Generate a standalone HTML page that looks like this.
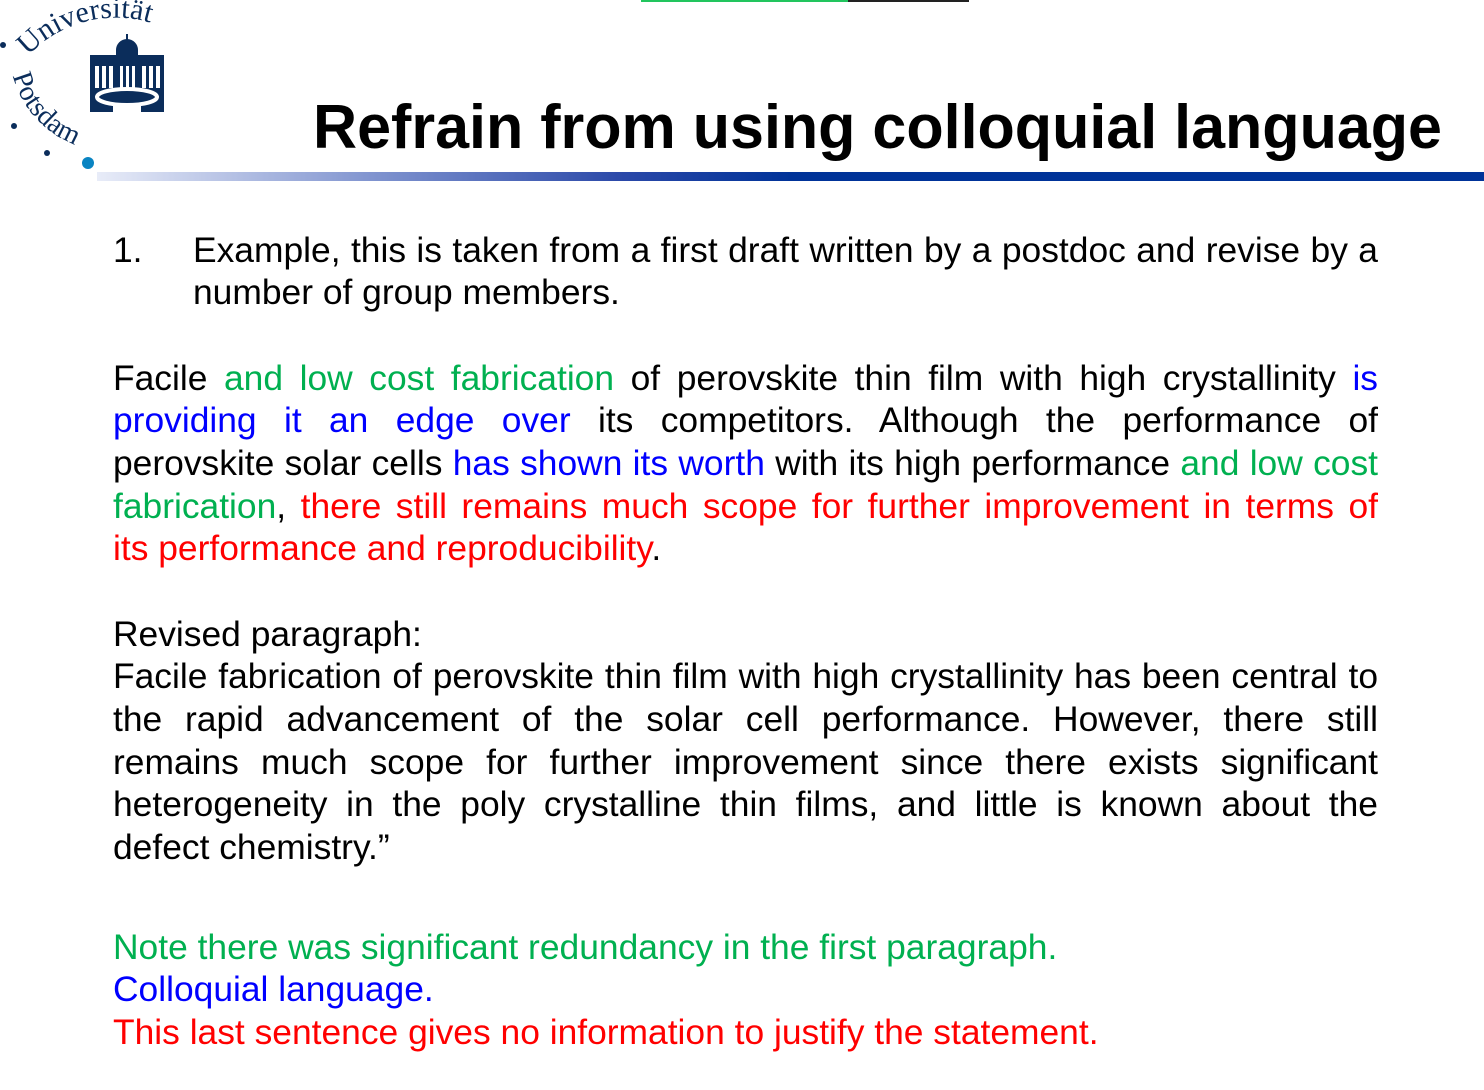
<!DOCTYPE html>
<html><head><meta charset="utf-8"><style>
body{margin:0;width:1484px;height:1090px;background:#fff;position:relative;overflow:hidden;font-family:"Liberation Sans",Arial,sans-serif;}
.l{position:absolute;left:113px;width:1265px;font-size:35.4px;line-height:40px;color:#000;white-space:nowrap;}
.j{text-align:justify;text-align-last:justify;white-space:normal;}
.g{color:#00b050}.b{color:#0000ff}.r{color:#ff0000}
</style></head><body>
<div style="position:absolute;left:641px;top:0;width:207px;height:2px;background:#22c55e"></div>
<div style="position:absolute;left:848px;top:0;width:121px;height:2px;background:#222"></div>
<div style="position:absolute;left:97px;top:172px;width:1387px;height:9px;background:linear-gradient(90deg,#e8ecf8 0%,#7f93cf 20%,#2a48a8 38%,#003399 50%,#003399 100%)"></div>
<svg style="position:absolute;left:0;top:0" width="300" height="190">
 <defs><path id="arc" d="M28,56 A120,120 0 0 1 160,26"/><path id="arc2" d="M12,72 A100,100 0 0 0 98,150"/></defs>
 <text font-family="Liberation Serif,serif" font-size="30" fill="#0b2d5b"><textPath href="#arc" startOffset="0">Universität</textPath></text>
 <text font-family="Liberation Serif,serif" font-size="28" fill="#0b2d5b"><textPath href="#arc2" startOffset="3%">Potsdam</textPath></text>
 <circle cx="3" cy="45" r="3" fill="#0b2d5b"/><circle cx="14" cy="126" r="3" fill="#0b2d5b"/><circle cx="47" cy="153" r="3" fill="#0b2d5b"/><circle cx="88" cy="163" r="6" fill="#0a84c2"/>
 <g fill="#0b2d5b">
  <path d="M116,50 a11,11 0 0 1 22,0 v6 h-22z"/><rect x="126" y="34" width="2" height="6"/>
  <rect x="90" y="55" width="74" height="7"/>
  <rect x="90" y="62" width="74" height="50"/>
 </g>
 <g fill="#fff">
  <rect x="95" y="66" width="4" height="22"/><rect x="102" y="66" width="4" height="22"/><rect x="109" y="66" width="4" height="22"/>
  <rect x="120" y="66" width="3" height="22"/><rect x="126" y="66" width="3" height="22"/><rect x="132" y="66" width="3" height="22"/>
  <rect x="142" y="66" width="4" height="22"/><rect x="149" y="66" width="4" height="22"/><rect x="156" y="66" width="4" height="22"/>
  <ellipse cx="127" cy="97" rx="30" ry="8" fill="none" stroke="#fff" stroke-width="4"/>
  <rect x="113" y="104" width="28" height="8"/>
 </g>
</svg>
<svg style="position:absolute;left:0;top:0" width="1484" height="190">
 <text x="313" y="148" font-family="Liberation Sans,Arial,sans-serif" font-weight="bold" font-size="62" textLength="1129" lengthAdjust="spacingAndGlyphs" fill="#000">Refrain from using colloquial language</text>
</svg>
<div class="l" style="top:230px">1.</div>
<div class="l j" style="top:230px;left:193px;width:1185px">Example, this is taken from a first draft written by a postdoc and revise by a</div>
<div class="l" style="top:272px;left:193px">number of group members.</div>

<div class="l j" style="top:358px">Facile <span class="g">and low cost fabrication</span> of perovskite thin film with high crystallinity <span class="b">is</span></div>
<div class="l j" style="top:400px"><span class="b">providing it an edge over</span> its competitors. Although the performance of</div>
<div class="l j" style="top:443px">perovskite solar cells <span class="b">has shown its worth</span> with its high performance <span class="g">and low cost</span></div>
<div class="l j" style="top:486px"><span class="g">fabrication</span>, <span class="r">there still remains much scope for further improvement in terms of</span></div>
<div class="l" style="top:528px"><span class="r">its performance and reproducibility</span>.</div>

<div class="l" style="top:614px">Revised paragraph:</div>
<div class="l j" style="top:656px">Facile fabrication of perovskite thin film with high crystallinity has been central to</div>
<div class="l j" style="top:699px">the rapid advancement of the solar cell performance. However, there still</div>
<div class="l j" style="top:742px">remains much scope for further improvement since there exists significant</div>
<div class="l j" style="top:784px">heterogeneity in the poly crystalline thin films, and little is known about the</div>
<div class="l" style="top:827px">defect chemistry.”</div>

<div class="l g" style="top:927px">Note there was significant redundancy in the first paragraph.</div>
<div class="l b" style="top:969px">Colloquial language.</div>
<div class="l r" style="top:1012px">This last sentence gives no information to justify the statement.</div>
</body></html>
